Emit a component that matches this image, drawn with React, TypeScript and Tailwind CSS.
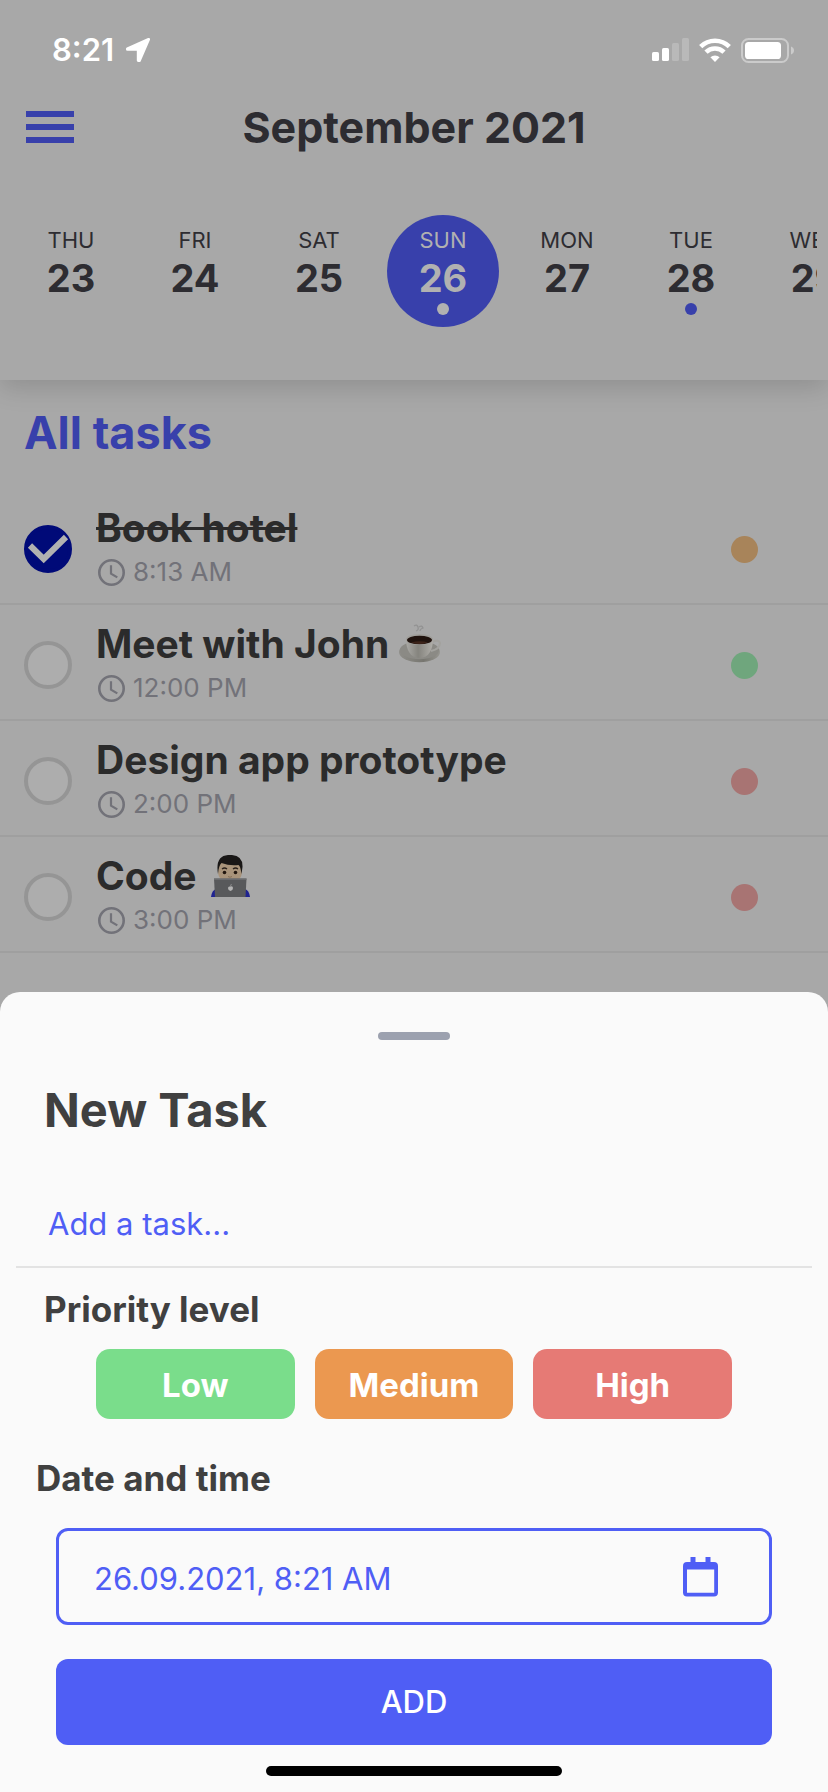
import { useState } from "react";

const days = [
  { label: "THU", date: 23 },
  { label: "FRI", date: 24 },
  { label: "SAT", date: 25 },
  { label: "SUN", date: 26, dot: true, selected: true },
  { label: "MON", date: 27 },
  { label: "TUE", date: 28, dot: true },
  { label: "WED", date: 29 },
];

const tasks = [
  { id: "hotel", title: "Book hotel", time: "8:13 AM", color: "bg-[#a8845a]" },
  { id: "john", title: "Meet with John", time: "12:00 PM", color: "bg-[#6fa67d]", icon: "coffee" },
  { id: "design", title: "Design app prototype", time: "2:00 PM", color: "bg-[#a87473]" },
  { id: "code", title: "Code", time: "3:00 PM", color: "bg-[#a87473]", icon: "coder" },
];

const priorities = [
  { name: "Low", color: "bg-[#7add8b]" },
  { name: "Medium", color: "bg-[#eb9850]" },
  { name: "High", color: "bg-[#e67a75]" },
];

function LocationArrow() {
  return (
    <svg className="size-6" viewBox="0 0 24 24" fill="#fff" stroke="#fff" strokeWidth="2.8" strokeLinejoin="round" aria-hidden="true">
      <path d="M22.6 1.4 1.4 10.7v.7h10.8v11.2h1.2Z" />
    </svg>
  );
}

function Signal() {
  return (
    <svg className="h-6 w-[37px]" viewBox="0 0 37 24" fill="#fff" aria-hidden="true">
      <rect x="0" y="14" width="7" height="9" rx="1.6" />
      <rect x="10" y="10" width="7" height="13" rx="1.6" />
      <rect x="20" y="5" width="7" height="18" rx="1.6" opacity=".2" />
      <rect x="30" y="0" width="7" height="23" rx="1.6" opacity=".2" />
    </svg>
  );
}

function Wifi() {
  return (
    <svg className="h-6 w-8" viewBox="0 0 32 24" fill="none" stroke="#fff" strokeWidth="4.6" aria-hidden="true">
      <path d="M1.7 8.6a20.4 20.4 0 0 1 28.6 0" />
      <path d="M7 14.2a12.8 12.8 0 0 1 18 0" />
      <path d="M16 24l-4.6-4.7a6.5 6.5 0 0 1 9.2 0Z" fill="#fff" stroke="none" />
    </svg>
  );
}

function Battery() {
  return (
    <svg className="h-[25px] w-[53px]" viewBox="0 0 53 25" aria-hidden="true">
      <rect x="1" y="1" width="46" height="23" rx="6.5" fill="none" stroke="#cbcbcb" strokeWidth="2" />
      <rect x="4" y="4" width="36" height="17" rx="3.6" fill="#fff" />
      <path d="M50 8.5q3 1.2 3 4t-3 4Z" fill="#cbcbcb" />
    </svg>
  );
}

function Clock() {
  return (
    <svg className="size-[27px]" viewBox="0 0 27 27" fill="none" stroke="#727279" aria-hidden="true">
      <circle cx="13.5" cy="13.5" r="12.2" strokeWidth="2.6" />
      <path d="M13 6.3v8.3l6.3 3.8" strokeWidth="2.2" />
    </svg>
  );
}

function Coffee() {
  return (
    <svg className="h-10 w-[42px]" viewBox="0 0 42 40" aria-label="coffee" role="img">
      <defs>
        <linearGradient id="cup" x1="0" x2="1">
          <stop offset="0" stopColor="#aaa9a5" />
          <stop offset=".45" stopColor="#85847e" />
          <stop offset="1" stopColor="#b0aea9" />
        </linearGradient>
        <linearGradient id="saucer" x1="0" x2="1">
          <stop offset="0" stopColor="#8f8e89" />
          <stop offset=".6" stopColor="#777670" />
          <stop offset="1" stopColor="#96958f" />
        </linearGradient>
      </defs>
      <path d="M15 2q3-2 4 1t-2 4M20 3q3-2 4 1-3 1-3 3" fill="none" stroke="#939393" strokeWidth="1.3" />
      <ellipse cx="20.5" cy="28" rx="20.5" ry="10.2" fill="url(#saucer)" />
      <ellipse cx="20.5" cy="26.2" rx="19.5" ry="9" fill="#8b8a85" />
      <path d="M33 18q7-3 8 1 0 6-9 8" fill="none" stroke="#a3a29e" strokeWidth="2" />
      <path d="M7 15c0 10 4 19 13.5 19S34 25 34 15Z" fill="url(#cup)" />
      <ellipse cx="20.5" cy="15.5" rx="13.5" ry="5.5" fill="#a09f9b" />
      <ellipse cx="20.5" cy="16" rx="12.5" ry="4.3" fill="#20130e" />
      <path d="M12 18.5q8 3 17 0-8-2.5-17 0Z" fill="#3d241a" />
    </svg>
  );
}

function Coder() {
  return (
    <svg className="h-[42px] w-[43px]" viewBox="-4 0 43 42" aria-label="technologist" role="img">
      <path d="M0 42q1-7 5-8h29q4 1 5 8Z" fill="#1f2391" />
      <ellipse cx="19" cy="16" rx="12" ry="13" fill="#a8937a" />
      <path d="M7 19Q4 1 17 0q15-1 14.5 12L30.5 19q-1-8-3-9-9 1-17-2-3 3-3.5 11Z" fill="#191716" />
      <path d="M11 14q2.5-2 5 0M22 14q2.5-2 5 0" fill="none" stroke="#29201b" strokeWidth="1.3" />
      <circle cx="13.5" cy="17.5" r="1.8" fill="#21160f" />
      <circle cx="24.5" cy="17.5" r="1.8" fill="#21160f" />
      <path d="M17 21.5q2 1.5 4 0" fill="none" stroke="#846f59" strokeWidth="1" />
      <path d="M3 23.5h32.5L34.5 42H4Z" fill="#58595b" />
      <path d="M3 23.5h32.5v1.2H3Z" fill="#717274" />
      <path d="M19 31.5q3-1 3 1.6T19.5 36Q17 35.5 17 33.3t2-1.8Zm.2-.5q0-1.5 1.5-2 0 1.5-1.5 2Z" fill="#b3b3b3" />
    </svg>
  );
}

function CalendarIcon() {
  return (
    <svg className="h-10 w-[35px]" viewBox="0 0 35 40" fill="#4f5ef5" aria-hidden="true">
      <path fillRule="evenodd" d="M7.5 0h5v5h10V0h5v5H31q4 0 4 4v26.5q0 4-4 4H4q-4 0-4-4V9q0-4 4-4h3.5ZM4 12.5v23.3h27.2V12.5Z" />
    </svg>
  );
}

export default function App() {
  const [done, setDone] = useState<Record<string, boolean>>({ hotel: true });
  const [name, setName] = useState("");
  const [when, setWhen] = useState("26.09.2021, 8:21 AM");

  return (
    <div className="flex min-h-screen flex-col overflow-hidden bg-[#a8a8a8] font-['Inter','Liberation_Sans',sans-serif] text-[#2b2b2b]">
      <header className="pb-[53px] shadow-[0_8px_24px_rgba(0,0,0,0.14)]">
        <div className="flex items-center justify-between pt-8 pr-[34px] pl-[52px] text-white">
          <div className="flex items-center gap-3">
            <span className="text-[31px] leading-9 font-semibold">8:21</span>
            <LocationArrow />
          </div>
          <div className="flex items-center gap-[10px]">
            <Signal />
            <Wifi />
            <Battery />
          </div>
        </div>
        <div className="mt-8 grid grid-cols-[48px_1fr_48px] items-center px-[26px]">
          <button type="button" aria-label="Menu" className="flex flex-col gap-[7px]">
            <span className="h-[6px] w-full bg-[#3840ab]" />
            <span className="h-[6px] w-full bg-[#3840ab]" />
            <span className="h-[6px] w-full bg-[#3840ab]" />
          </button>
          <h1 className="text-center text-[43px] leading-[54px] font-bold text-[#2d2c31]">September 2021</h1>
        </div>
        <div className="mt-[61px] pr-[11px] pl-[9px]">
          <div className="flex overflow-hidden">
            {days.map((d) => (
              <div key={d.date} className="flex w-[124px] shrink-0 justify-center">
                <button
                  type="button"
                  className={`flex size-28 flex-col items-center rounded-full pt-3 ${
                    d.selected ? "bg-[#3840ab] text-[#b1b1b1]" : "text-[#2d2c31]"
                  }`}
                >
                  <span className="text-[22px] leading-[26px]">{d.label}</span>
                  <span className="mt-[2px] text-[38px] leading-[46px] font-bold">{d.date}</span>
                  {d.dot && (
                    <span className={`mt-[2px] size-3 rounded-full ${d.selected ? "bg-[#b1b1b1]" : "bg-[#3840ab]"}`} />
                  )}
                </button>
              </div>
            ))}
          </div>
        </div>
      </header>

      <main className="flex-1 pt-[25px]">
        <h2 className="pl-6 text-[45px] leading-[56px] font-bold text-[#3840ab]">All tasks</h2>
        <ul className="mt-7">
          {tasks.map((t) => (
            <li key={t.id} className="flex items-center border-b-2 border-[#9f9f9f] py-[15px] pr-[70px] pl-6">
              <div className="relative mt-[6px] size-12 shrink-0">
                <input
                  id={t.id}
                  type="checkbox"
                  checked={!!done[t.id]}
                  onChange={(e) => setDone({ ...done, [t.id]: e.target.checked })}
                  className="size-12 appearance-none rounded-full border-4 border-[#959595] bg-[#adadad] checked:border-[#000a78] checked:bg-[#000a78]"
                />
                {done[t.id] && (
                  <svg className="pointer-events-none absolute inset-0 size-12" viewBox="0 0 48 48" fill="none" stroke="#b1b1b1" strokeWidth="6" aria-hidden="true">
                    <path d="M6 20.5 19.7 34 42 12" />
                  </svg>
                )}
              </div>
              <div className="ml-6 flex-1">
                <label
                  htmlFor={t.id}
                  className={`flex items-center gap-[10px] text-[39px] leading-[48px] font-bold ${done[t.id] ? "line-through" : ""}`}
                >
                  {t.title}
                  {t.icon === "coffee" && <Coffee />}
                  {t.icon === "coder" && <Coder />}
                </label>
                <div className="mt-1 flex items-center gap-2 pl-[2px] text-[26px] leading-8 text-[#727279]">
                  <Clock />
                  {t.time}
                </div>
              </div>
              <span className={`mt-[6px] size-[27px] rounded-full ${t.color}`} />
            </li>
          ))}
        </ul>
      </main>

      <section className="rounded-t-[20px] bg-[#fafafa] pt-10 text-[#404040]">
        <div className="mx-auto h-2 w-[72px] rounded-full bg-[#9ca1af]" />
        <h2 className="mt-[42px] pl-11 text-[47px] leading-[56px] font-bold">New Task</h2>
        <div className="mt-[42px] px-4">
          <input
            type="text"
            aria-label="Task"
            placeholder="Add a task..."
            value={name}
            onChange={(e) => setName(e.target.value)}
            className="block h-[88px] w-full border-b-2 border-[#e3e3e3] pl-8 text-[31px] text-[#4f5ef5] outline-none placeholder:text-[#4f5ef5]"
          />
        </div>
        <h3 className="mt-[19px] pl-11 text-[35px] leading-[44px] font-bold">Priority level</h3>
        <div className="mt-[18px] grid grid-cols-3 gap-5 px-24">
          {priorities.map((p) => (
            <button key={p.name} type="button" className={`h-[70px] rounded-[14px] pt-1 text-[33px] font-bold text-white ${p.color}`}>
              {p.name}
            </button>
          ))}
        </div>
        <h3 className="mt-[37px] pl-9 text-[35px] leading-[44px] font-bold">
          <label htmlFor="when">Date and time</label>
        </h3>
        <div className="px-14">
          <div className="mt-7 flex h-[97px] items-center rounded-xl border-[3px] border-[#4f5ef5] pr-[51px] pl-[35px]">
            <input
              id="when"
              type="text"
              value={when}
              onChange={(e) => setWhen(e.target.value)}
              className="h-full min-w-0 flex-1 pt-1 text-[31px] text-[#4f5ef5] outline-none"
            />
            <button type="button" aria-label="Open calendar">
              <CalendarIcon />
            </button>
          </div>
          <button type="button" className="mt-[34px] block h-[86px] w-full rounded-xl bg-[#4f5ef5] text-[31px] font-medium text-white">
            ADD
          </button>
        </div>
        <div className="pt-[21px] pb-4">
          <div className="mx-auto h-[10px] w-[296px] rounded-full bg-black" />
        </div>
      </section>
    </div>
  );
}
